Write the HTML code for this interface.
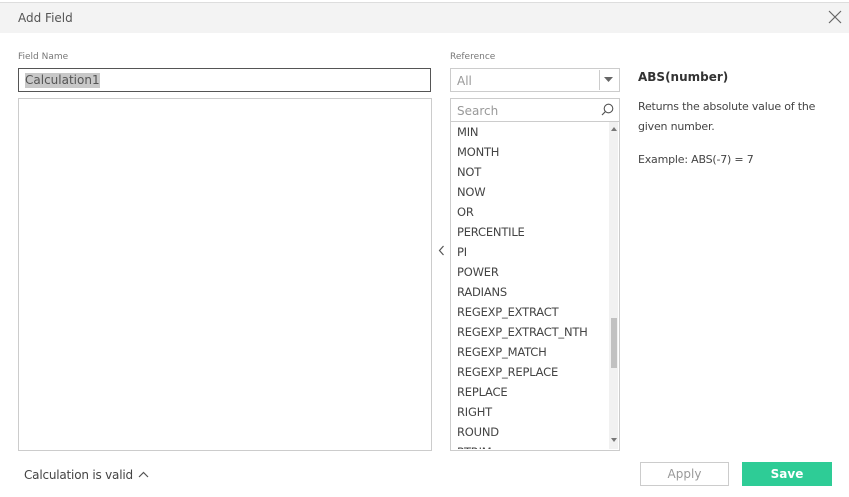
<!DOCTYPE html>
<html><head><style>
body{margin:0;width:849px;height:497px;background:#fff;font-family:"DejaVu Sans","Liberation Sans",sans-serif;color:#333;position:relative;overflow:hidden}
.a{position:absolute}
.hdr{left:0;top:2px;width:849px;height:30px;background:#f3f3f3;border-top:1px solid #ddd}
.li{position:absolute;left:7px;font-size:11.5px;color:#444;letter-spacing:-0.2px}
</style></head><body>
<div class="a hdr"></div>
<div class="a" style="left:18px;top:11px;font-size:12px;color:#555">Add Field</div>
<svg class="a" style="left:828px;top:10px" width="14" height="14"><path d="M1 1L13 13M13 1L1 13" stroke="#666" stroke-width="1.2"/></svg>
<div class="a" style="left:18px;top:52px;font-size:9px;color:#777">Field Name</div>
<div class="a" style="left:18px;top:68px;width:411px;height:22px;border:1px solid #555"></div>
<div class="a" style="left:25px;top:73px;font-size:12px;color:#555;background:#c8c8c8;line-height:15px">Calculation1</div>
<div class="a" style="left:18px;top:98px;width:412px;height:351px;border:1px solid #ccc"></div>
<div class="a" style="left:450px;top:52px;font-size:9px;color:#777">Reference</div>
<div class="a" style="left:450px;top:68px;width:168px;height:22px;border:1px solid #ccc"></div>
<div class="a" style="left:457px;top:74px;font-size:12px;color:#999">All</div>
<div class="a" style="left:599px;top:70px;width:1px;height:20px;background:#ccc"></div>
<svg class="a" style="left:604px;top:77px" width="9" height="6"><path d="M0 0H9L4.5 5Z" fill="#666"/></svg>
<div class="a" style="left:450px;top:98px;width:168px;height:351px;border:1px solid #ccc"></div>
<div class="a" style="left:451px;top:121px;width:168px;height:1px;background:#ccc"></div>
<div class="a" style="left:457px;top:104px;font-size:12px;color:#999">Search</div>
<svg class="a" style="left:601px;top:103px" width="13" height="13"><circle cx="7.5" cy="5.5" r="4.3" fill="none" stroke="#555" stroke-width="1.1"/><path d="M4.5 8.5L1 12" stroke="#555" stroke-width="1.2"/></svg>
<div class="a" style="left:609px;top:122px;width:9px;height:327px;background:#f1f1f1"></div>
<div class="a" style="left:611px;top:318px;width:6px;height:50px;background:#c1c1c1"></div>
<svg class="a" style="left:611px;top:127px" width="6" height="4"><path d="M0 4H6L3 0Z" fill="#777"/></svg>
<svg class="a" style="left:611px;top:438px" width="6" height="4"><path d="M0 0H6L3 4Z" fill="#777"/></svg>
<div class="a" style="left:450px;top:122px;width:158px;height:327px;overflow:hidden">
<div class="li" style="top:3px">MIN</div><div class="li" style="top:23px">MONTH</div><div class="li" style="top:43px">NOT</div><div class="li" style="top:63px">NOW</div><div class="li" style="top:83px">OR</div><div class="li" style="top:103px">PERCENTILE</div><div class="li" style="top:123px">PI</div><div class="li" style="top:143px">POWER</div><div class="li" style="top:163px">RADIANS</div><div class="li" style="top:183px">REGEXP_EXTRACT</div><div class="li" style="top:203px">REGEXP_EXTRACT_NTH</div><div class="li" style="top:223px">REGEXP_MATCH</div><div class="li" style="top:243px">REGEXP_REPLACE</div><div class="li" style="top:263px">REPLACE</div><div class="li" style="top:283px">RIGHT</div><div class="li" style="top:303px">ROUND</div><div class="li" style="top:323px">RTRIM</div>
</div>
<svg class="a" style="left:438px;top:245px" width="7" height="11"><path d="M5.5 1L1.5 5.5L5.5 10" fill="none" stroke="#555" stroke-width="1.2"/></svg>
<div class="a" style="left:638px;top:70px;font-size:12px;font-weight:bold;color:#333">ABS(number)</div>
<div class="a" style="left:638px;top:100px;font-size:11px;color:#444;white-space:nowrap;letter-spacing:-0.2px">Returns the absolute value of the</div>
<div class="a" style="left:638px;top:120px;font-size:11px;color:#444;letter-spacing:-0.2px">given number.</div>
<div class="a" style="left:638px;top:153px;font-size:11px;color:#444;letter-spacing:-0.2px">Example: ABS(-7) = 7</div>
<div class="a" style="left:24px;top:468px;font-size:12px;color:#444;letter-spacing:-0.2px">Calculation is valid</div>
<svg class="a" style="left:138px;top:471px" width="11" height="7"><path d="M1 6L5.5 1.5L10 6" fill="none" stroke="#555" stroke-width="1.2"/></svg>
<div class="a" style="left:640px;top:462px;width:87px;height:22px;border:1px solid #ccc;text-align:center;line-height:23px;font-size:12px;color:#999">Apply</div>
<div class="a" style="left:742px;top:462px;width:90px;height:24px;background:#2ecc96;text-align:center;line-height:25px;font-size:12px;font-weight:bold;color:#fff">Save</div>
</body></html>
